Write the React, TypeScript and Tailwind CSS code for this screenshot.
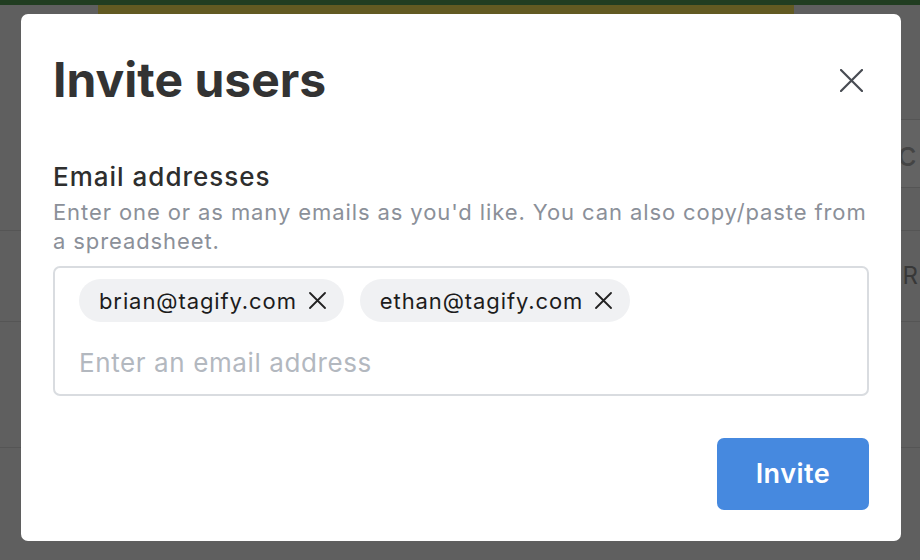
import React from 'react';

// Close icon drawn to match the thin X in the dialog header
const CloseIcon: React.FC<{ size: number; stroke: number; className?: string }> = ({ size, stroke, className }) => (
  <svg width={size} height={size} viewBox={`0 0 ${size} ${size}`} fill="none" className={className}>
    <path
      d={`M1 1L${size - 1} ${size - 1}M${size - 1} 1L1 ${size - 1}`}
      stroke="currentColor"
      strokeWidth={stroke}
      strokeLinecap="round"
    />
  </svg>
);

const EmailChip: React.FC<{ email: string }> = ({ email }) => (
  <div className="flex h-[43px] items-center gap-[12px] rounded-full bg-[#f0f1f3] pl-[20px] pr-[18px]">
    <span className="text-[22px] leading-none tracking-[0.9px] text-[#1c1c1c]">{email}</span>
    <CloseIcon size={17} stroke={1.8} className="text-[#222]" />
  </div>
);

export default function App() {
  const emails = ['brian@tagify.com', 'ethan@tagify.com'];

  return (
    <div className="relative h-[560px] w-[920px] overflow-hidden bg-[#5f5f5f] font-['Inter',sans-serif]">
      {/* Page behind the overlay */}
      <div className="h-[5px] bg-[#213d21]" />
      <div className="ml-[98px] h-[9px] w-[696px] bg-[#625a22]" />
      <div className="h-[105px]" />
      <div className="flex justify-end">
        <div className="flex h-[69px] w-[90px] items-center justify-end border-y border-[#555] bg-[#636363] pr-[3px] text-[34px] text-[#444]">
          Searc
        </div>
      </div>
      <div className="h-[42px]" />
      <div className="flex h-[91px] items-center justify-end border-t border-[#555] pr-[2px]">
        <span className="text-[24px] text-[#383838]">R</span>
      </div>
      <div className="h-[126px] border-t border-[#555]" />
      <div className="border-t border-[#555]" />

      {/* Dialog */}
      <div className="absolute inset-0 pl-[21px] pt-[14px]">
        <div className="flex w-[880px] flex-col rounded-[7px] bg-white px-[32px] pb-[31px] pt-[42px]">
          <div className="flex items-center justify-between">
            <h1 className="text-[48px] font-bold leading-[48px] text-[#333]">Invite users</h1>
            <button className="mr-[6px] text-[#474b52]">
              <CloseIcon size={23} stroke={2.2} />
            </button>
          </div>

          <label className="mt-[57px] text-[26px] font-medium leading-[32px] tracking-[1px] text-[#2e2e2e]">
            Email addresses
          </label>
          <p className="mt-[5px] text-[22px] leading-[29px] tracking-[0.9px] text-[#8b9099]">
            Enter one or as many emails as you'd like. You can also copy/paste from a spreadsheet.
          </p>

          <div className="mt-[10px] flex flex-col rounded-[7px] border-2 border-[#d9dce0] px-[24px] pb-[10px] pt-[11px]">
            <div className="flex gap-[16px]">
              {emails.map((e) => (
                <EmailChip key={e} email={e} />
              ))}
            </div>
            <input
              className="mt-[18px] h-[44px] text-[26px] tracking-[0.6px] text-[#333] outline-none placeholder:text-[#b3b8bf]"
              placeholder="Enter an email address"
            />
          </div>

          <div className="mt-[42px] flex justify-end">
            <button className="h-[72px] w-[152px] rounded-[7px] bg-[#4689df] text-[27px] font-semibold tracking-[0.5px] text-white">
              Invite
            </button>
          </div>
        </div>
      </div>
    </div>
  );
}
